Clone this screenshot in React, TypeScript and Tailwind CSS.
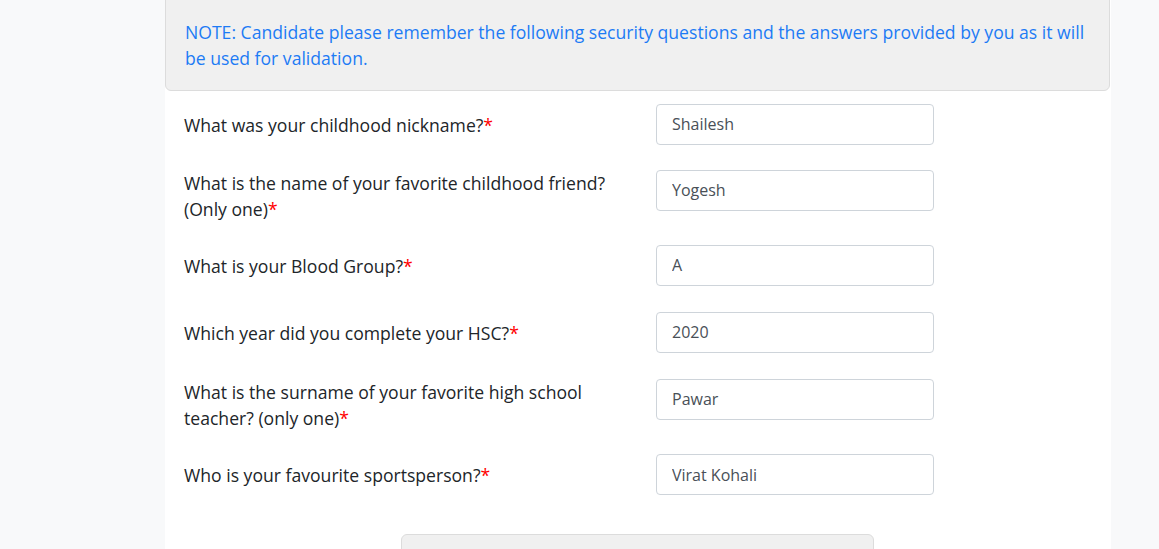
import { useState } from "react";

type Question = {
  label: string;
  value: string;
  twoLine?: boolean;
  gap: string;
};

const questions: Question[] = [
  { label: "What was your childhood nickname?", value: "Shailesh", gap: "mb-[25px]" },
  { label: "What is the name of your favorite childhood friend? (Only one)", value: "Yogesh", twoLine: true, gap: "mb-[22px]" },
  { label: "What is your Blood Group?", value: "A", gap: "mb-[26px]" },
  { label: "Which year did you complete your HSC?", value: "2020", gap: "mb-[26px]" },
  { label: "What is the surname of your favorite high school teacher? (only one)", value: "Pawar", twoLine: true, gap: "mb-[23px]" },
  { label: "Who is your favourite sportsperson?", value: "Virat Kohali", gap: "mb-[39px]" },
];

function QuestionRow({ q }: { q: Question }) {
  const [val, setVal] = useState(q.value);
  return (
    <div className={`flex items-start ${q.gap}`}>
      <label
        className={`w-[457px] shrink-0 text-[17.6px] leading-[26.4px] text-[#212529] ${
          q.twoLine ? "pt-0" : "pt-[8px] pb-[6px]"
        }`}
      >
        {q.label}
        <span className="text-[#ff0000]">*</span>
      </label>
      <input
        value={val}
        onChange={(e) => setVal(e.target.value)}
        className="ml-[15px] h-[41px] w-[278px] rounded-[4px] border border-[#ced4da] bg-white px-[15px] text-[16px] text-[#495057] outline-none"
      />
    </div>
  );
}

export default function App() {
  return (
    <div
      className="min-h-screen overflow-hidden bg-[#f8f9fa]"
      style={{ fontFamily: '"Open Sans", "Noto Sans", sans-serif' }}
    >
      <div className="ml-[165px] min-h-screen w-[946px] bg-white">
        <div className="-mt-[9px] w-[945px] rounded-[6px] border border-[#dcdcdc] bg-[#f0f0f0] pl-[19px] pr-[24px] pb-[18px] pt-[27px] text-[17.6px] leading-[26.4px] text-[#1d7bf5]">
          NOTE: Candidate please remember the following security questions and the answers provided by you as it will be
          used for validation.
        </div>

        <div className="pl-[19px] pt-[13px]">
          {questions.map((q) => (
            <QuestionRow key={q.label} q={q} />
          ))}
        </div>

        <div className="flex justify-center pr-[2px]">
          <div className="h-[40px] w-[473px] rounded-t-[6px] border border-[#dcdcdc] bg-[#f0f0f0]" />
        </div>
      </div>
    </div>
  );
}
